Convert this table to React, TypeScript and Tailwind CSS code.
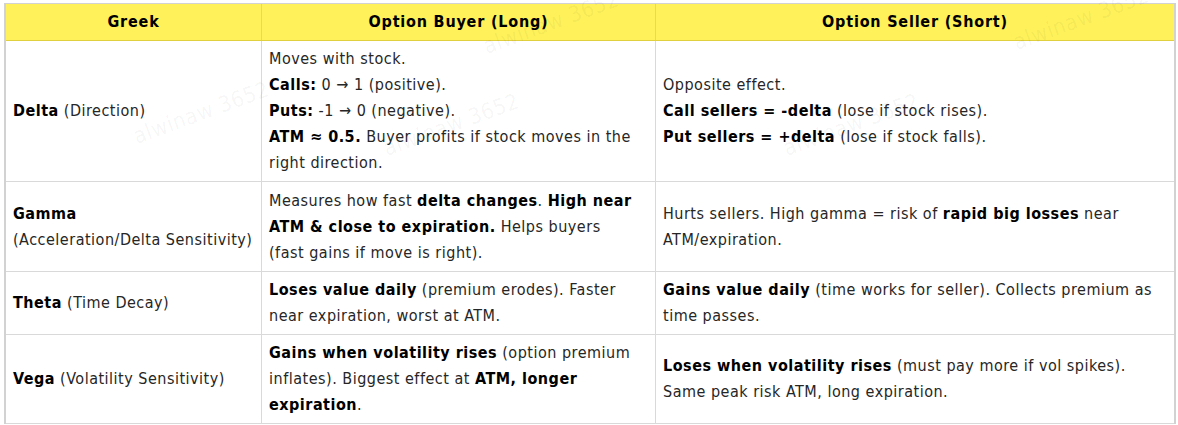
import React from "react";

/**
 * Option Greeks table — buyer vs seller effects.
 */

interface Row {
  greek: React.ReactNode;
  buyer: React.ReactNode;
  seller: React.ReactNode;
  height: string;
}

const ROWS: Row[] = [
  {
    greek: (
      <>
        <b className="font-bold text-black">Delta</b> (Direction)
      </>
    ),
    buyer: (
      <>
        Moves with stock.
        <br />
        <b className="font-bold text-black">Calls:</b> 0 → 1 (positive).
        <br />
        <b className="font-bold text-black">Puts:</b> -1 → 0 (negative).
        <br />
        <b className="font-bold text-black">ATM ≈ 0.5.</b> Buyer profits if stock moves in the right direction.
      </>
    ),
    seller: (
      <>
        Opposite effect.
        <br />
        <b className="font-bold text-black">Call sellers = -delta</b> (lose if stock rises).
        <br />
        <b className="font-bold text-black">Put sellers = +delta</b> (lose if stock falls).
      </>
    ),
    height: "h-[141px]",
  },
  {
    greek: (
      <>
        <b className="font-bold text-black">Gamma</b>
        <br />
        (Acceleration/Delta Sensitivity)
      </>
    ),
    buyer: (
      <>
        Measures how fast <b className="font-bold text-black">delta changes</b>.{" "}
        <b className="font-bold text-black">High near ATM &amp; close to expiration.</b> Helps buyers
        <br />
        (fast gains if move is right).
      </>
    ),
    seller: (
      <>
        Hurts sellers. High gamma = risk of <b className="font-bold text-black">rapid big losses</b> near
        ATM/expiration.
      </>
    ),
    height: "h-[90px]",
  },
  {
    greek: (
      <>
        <b className="font-bold text-black">Theta</b> (Time Decay)
      </>
    ),
    buyer: (
      <>
        <b className="font-bold text-black">Loses value daily</b> (premium erodes). Faster near expiration, worst at
        ATM.
      </>
    ),
    seller: (
      <>
        <b className="font-bold text-black">Gains value daily</b> (time works for seller). Collects premium as time
        passes.
      </>
    ),
    height: "h-[63px]",
  },
  {
    greek: (
      <>
        <b className="font-bold text-black">Vega</b> (Volatility Sensitivity)
      </>
    ),
    buyer: (
      <>
        <b className="font-bold text-black">Gains when volatility rises</b> (option premium inflates). Biggest effect
        at <b className="font-bold text-black">ATM, longer expiration</b>.
      </>
    ),
    seller: (
      <>
        <b className="font-bold text-black">Loses when volatility rises</b> (must pay more if vol spikes). Same peak
        risk ATM, long expiration.
      </>
    ),
    height: "h-[89px]",
  },
];

const WATERMARKS = [
  "left-[480px] top-[10px]",
  "left-[1010px] top-[6px]",
  "left-[130px] top-[100px]",
  "left-[380px] top-[112px]",
  "left-[780px] top-[112px]",
];

export default function App() {
  return (
    <div className="relative h-[425px] w-[1178px] overflow-hidden bg-white pl-[4px] pt-[3px] font-['DejaVu_Sans_Condensed','DejaVu_Sans',sans-serif] text-[16px] leading-[26px] tracking-[0.5px] text-[#262626]">
      <div className="w-[1172px] border-x-2 border-t border-[#d2d2d2]">
        {/* header */}
        <div className="grid h-[37px] grid-cols-[256px_394px_518px] border-b border-[#e0cf3e] bg-[#fef15a] font-bold tracking-[0.8px] text-black">
          <div className="flex items-center justify-center border-r border-[#e8da55]">Greek</div>
          <div className="flex items-center justify-center border-r border-[#e8da55]">Option Buyer (Long)</div>
          <div className="flex items-center justify-center">Option Seller (Short)</div>
        </div>

        {ROWS.map((row, i) => (
          <div
            key={i}
            className={`grid grid-cols-[256px_394px_518px] border-b border-[#d9d9d9] ${row.height}`}
          >
            <div className="flex items-center border-r border-[#d9d9d9] px-[7px]">
              <p>{row.greek}</p>
            </div>
            <div className="flex items-center border-r border-[#d9d9d9] px-[7px]">
              <p>{row.buyer}</p>
            </div>
            <div className="flex items-center px-[7px]">
              <p>{row.seller}</p>
            </div>
          </div>
        ))}
      </div>

      {/* faint watermark */}
      {WATERMARKS.map((pos) => (
        <span
          key={pos}
          className={`pointer-events-none absolute ${pos} -rotate-[20deg] select-none text-[22px] text-black/[0.045]`}
        >
          alwinaw 3652
        </span>
      ))}
    </div>
  );
}
